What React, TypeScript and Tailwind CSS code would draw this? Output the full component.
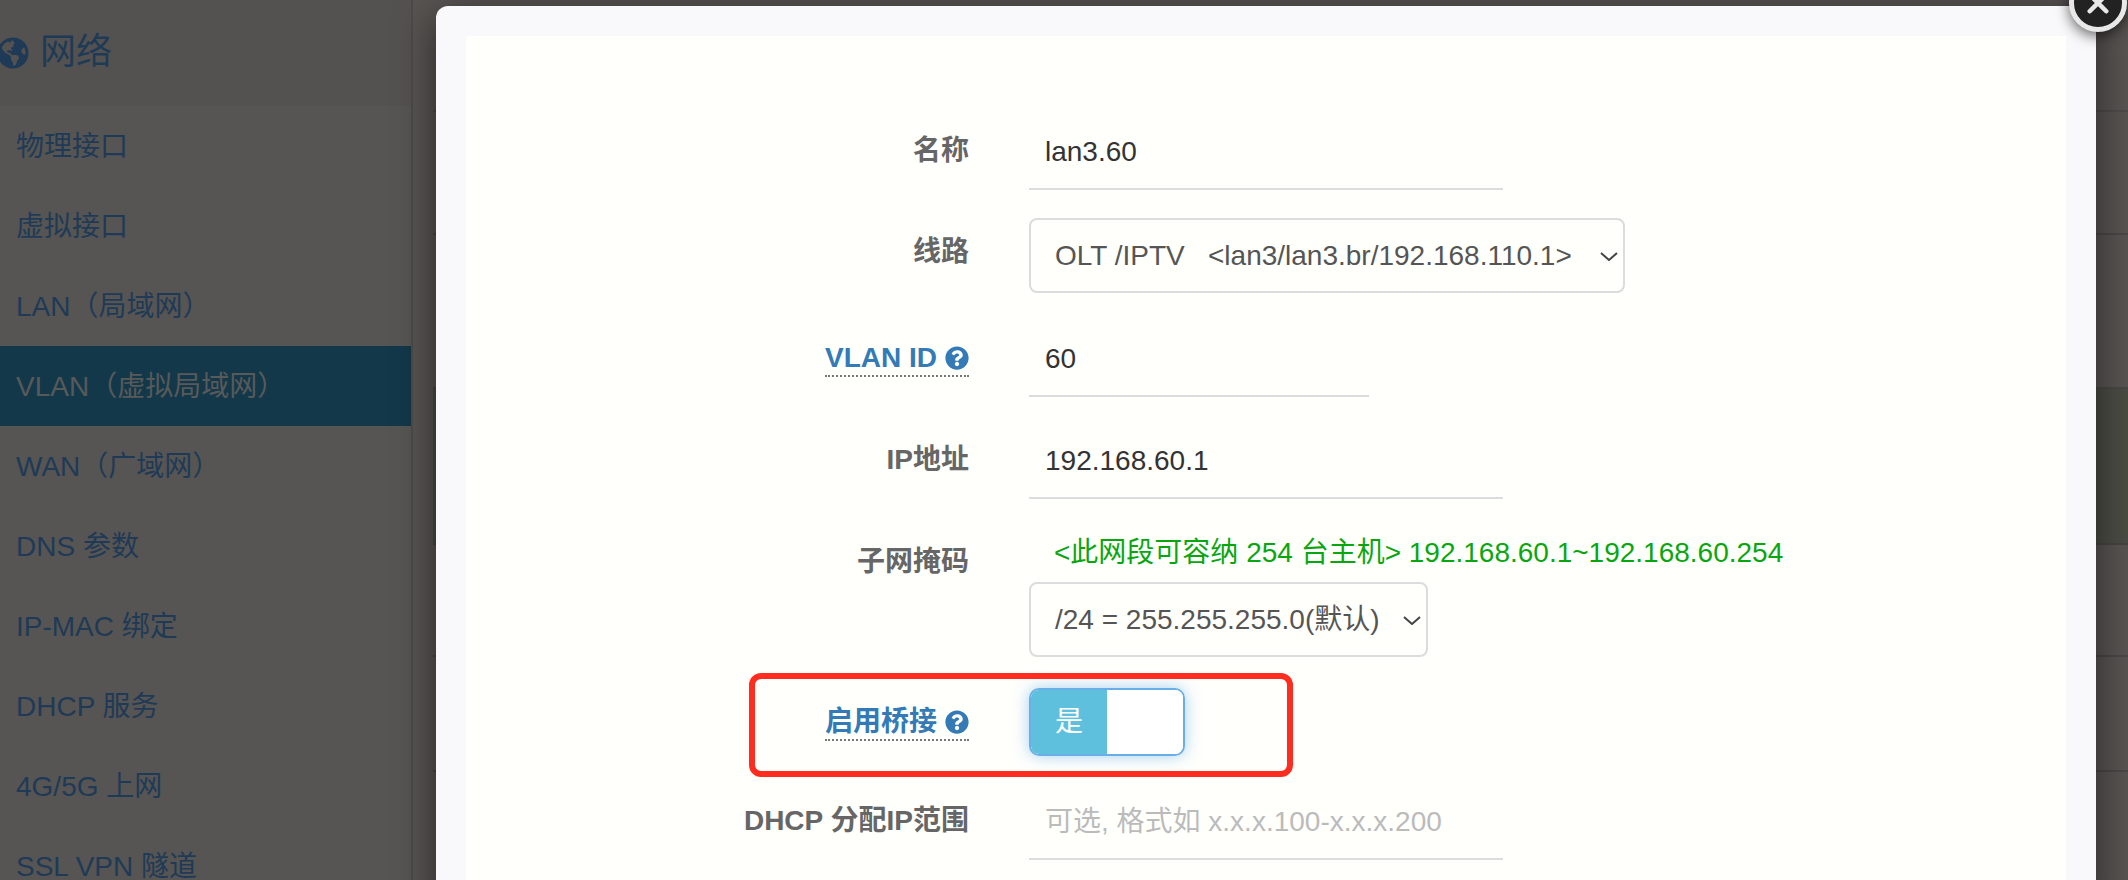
import React from "react";
import { FaGlobeAmericas, FaQuestionCircle } from "react-icons/fa";

const sideItems = [
  "物理接口",
  "虚拟接口",
  "LAN（局域网）",
  "VLAN（虚拟局域网）",
  "WAN（广域网）",
  "DNS 参数",
  "IP-MAC 绑定",
  "DHCP 服务",
  "4G/5G 上网",
  "SSL VPN 隧道",
];

function Sidebar() {
  return (
    <div className="w-[413px] shrink-0 h-full border-r-2 border-[#4d4b49] bg-[#565553] text-[#1f3a56] text-[28px]">
      <div className="h-[106px] bg-[#535250] flex items-center">
        <FaGlobeAmericas className="ml-[-3px] w-[32px] h-[32px] shrink-0" />
        <span className="ml-[11px] mt-[-3px] text-[36px]">网络</span>
      </div>
      {sideItems.map((item) => (
        <div
          key={item}
          className={
            item.startsWith("VLAN")
              ? "h-[80px] pl-[16px] pt-[1px] flex items-center bg-[#13384a] text-[#585a5a]"
              : "h-[80px] pl-[16px] pt-[1px] flex items-center"
          }
        >
          {item}
        </div>
      ))}
    </div>
  );
}

function Backdrop() {
  return (
    <div className="flex-1 h-full bg-[#585452] pl-[20px]">
      <div className="h-[112px] border-b-2 border-[#4e4b49]" />
      <div className="h-[123px] border-b-2 border-[#4a4846]" />
      <div className="h-[154px] border-b-2 border-[#4a4846]" />
      <div className="h-[156px] bg-[#4b4c44] border-b-2 border-[#454540]" />
      <div className="h-[112px] border-b-2 border-[#4a4846]" />
      <div className="h-[115px] border-b-2 border-[#4a4846]" />
    </div>
  );
}

function Label({ text, tip }: { text: string; tip?: boolean }) {
  if (tip) {
    return (
      <span className="inline-flex items-center gap-[8px] border-b-2 border-dotted border-[#777] font-bold text-[#337ab7] leading-[34px]">
        {text}
        <FaQuestionCircle className="w-[24px] h-[24px]" />
      </span>
    );
  }
  return <span className="font-bold text-[#666]">{text}</span>;
}

function Row({ children, label, tip, labelTop, height, mb }: { children: React.ReactNode; label: string; tip?: boolean; labelTop: string; height: string; mb: string }) {
  return (
    <div className={`flex ${height} ${mb}`}>
      <div className={`w-[503px] shrink-0 text-right leading-[40px] ${labelTop}`}>
        <Label text={label} tip={tip} />
      </div>
      <div className="ml-[60px] flex-1">{children}</div>
    </div>
  );
}

function TextInput({ value, placeholder, width }: { value?: string; placeholder?: string; width: string }) {
  return (
    <input
      readOnly
      value={value}
      placeholder={placeholder}
      className={`${width} h-[74px] pl-[16px] bg-transparent border-b-2 border-[#dcdcdc] outline-none text-[#333] placeholder:text-[#bbb] text-[28px] leading-[40px]`}
    />
  );
}

function SelectBox({ value, width }: { value: string; width: string }) {
  return (
    <div className={`relative ${width} h-[75px]`}>
      <select className="appearance-none w-full h-full pl-[24px] pr-[40px] bg-transparent border-2 border-[#dcdcdc] rounded-[8px] text-[#555] text-[28px] outline-none">
        <option>{value}</option>
      </select>
      <svg viewBox="0 0 18 9" className="absolute right-[7px] top-[34px] w-[18px] h-[9px]" fill="none" stroke="#444" strokeWidth="2">
        <path d="M1 1l8 7 8-7" />
      </svg>
    </div>
  );
}

function BridgeSwitch() {
  return (
    <div className="relative">
      <div className="flex w-[156px] h-[68px] border-2 border-[#6aaee8] rounded-[10px] overflow-hidden shadow-[0_0_16px_rgba(102,175,233,0.6)]">
        <div className="w-[76px] bg-[#5fc0de] text-white text-[28px] flex items-center justify-center">是</div>
        <div className="flex-1 bg-white" />
      </div>
      <div className="absolute left-[-280px] top-[-15px] w-[544px] h-[104px] border-[6px] border-[#ff2d20] rounded-[12px]" />
    </div>
  );
}

function Modal() {
  return (
    <div className="absolute left-[436px] top-[6px] w-[1660px] h-[900px] px-[30px] pt-[30px] bg-[#f9f9fb] rounded-t-[12px] shadow-[0_10px_40px_rgba(0,0,0,0.55)]">
      <div className="h-full bg-[#fffffc] pt-[80px]">
        <Row label="名称" labelTop="pt-[15px]" height="h-[74px]" mb="mb-[28px]">
          <TextInput value="lan3.60" width="w-[474px]" />
        </Row>
        <Row label="线路" labelTop="pt-[14px]" height="h-[75px]" mb="mb-[30px]">
          <SelectBox value={"OLT /IPTV\u00a0\u00a0\u00a0<lan3/lan3.br/192.168.110.1>"} width="w-[596px]" />
        </Row>
        <Row label="VLAN ID" tip labelTop="pt-[15px]" height="h-[74px]" mb="mb-[28px]">
          <TextInput value="60" width="w-[340px]" />
        </Row>
        <Row label="IP地址" labelTop="pt-[15px]" height="h-[74px]" mb="mb-[29px]">
          <TextInput value="192.168.60.1" width="w-[474px]" />
        </Row>
        <Row label="子网掩码" labelTop="pt-[14px]" height="h-[129px]" mb="mb-[31px]">
          <div className="pl-[25px] h-[54px] leading-[50px] text-[#0aa60f] whitespace-pre">{"<此网段可容纳 254 台主机> 192.168.60.1~192.168.60.254"}</div>
          <SelectBox value="/24 = 255.255.255.0(默认)" width="w-[399px]" />
        </Row>
        <Row label="启用桥接" tip labelTop="pt-[14px]" height="h-[68px]" mb="mb-[30px]">
          <BridgeSwitch />
        </Row>
        <Row label="DHCP 分配IP范围" labelTop="pt-[15px]" height="h-[74px]" mb="mb-0">
          <TextInput placeholder="可选, 格式如 x.x.x.100-x.x.x.200" width="w-[474px]" />
        </Row>
      </div>
    </div>
  );
}

export default function App() {
  return (
    <div
      className="relative w-[2128px] h-[880px] overflow-hidden flex text-[28px]"
      style={{ fontFamily: '"Liberation Sans", "Noto Sans CJK SC", sans-serif' }}
    >
      <Sidebar />
      <Backdrop />
      <Modal />
      <div className="absolute left-[2069px] top-[-26px] w-[58px] h-[58px] rounded-full bg-[#222] border-[5px] border-[#e8e8e8] shadow-[0_4px_14px_rgba(0,0,0,0.6)] flex items-center justify-center">
        <svg viewBox="0 0 24 24" className="w-[22px] h-[22px]" fill="none" stroke="#e8e8e8" strokeWidth="5" strokeLinecap="round">
          <path d="M3 3l18 18M21 3L3 21" />
        </svg>
      </div>
    </div>
  );
}
